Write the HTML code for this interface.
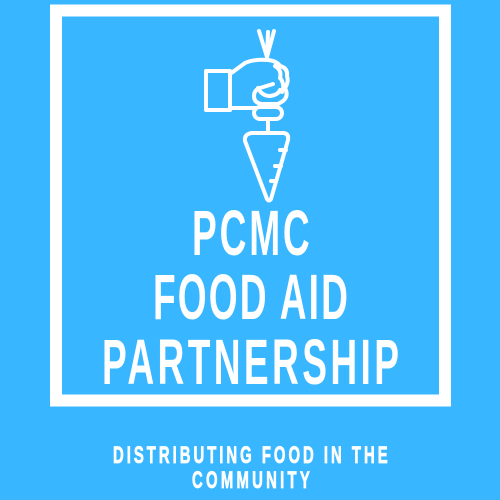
<!DOCTYPE html>
<html><head><style>
html,body{margin:0;padding:0;background:#38b6ff;}
body{width:500px;height:500px;overflow:hidden;}
svg{display:block;}
</style></head><body>
<svg width="500" height="500" viewBox="0 0 500 500" xmlns="http://www.w3.org/2000/svg">
<rect width="500" height="500" fill="#38b6ff"/>
<rect x="56" y="10.5" width="389" height="390" fill="none" stroke="#fff" stroke-width="12"/>
<g fill="none" stroke="#fff" stroke-width="4" stroke-linecap="round" stroke-linejoin="round">
<line x1="259" y1="31" x2="267" y2="57"/>
<line x1="274" y1="31" x2="267" y2="57"/>
<line x1="268" y1="32" x2="267" y2="57"/>
<rect x="206" y="71" width="24" height="39"/>
<path d="M230 74 L245 63 Q253 59 268 60 Q277 61 280 66 Q288 68 287 76 Q289 82 285 88 Q289 96 283 101 L278 104 L262 104 Q254 103 254 96 Q254 90 260 88"/>
<path d="M230 108 L256 108"/>
<path d="M260 88 L273 84 M275 66 Q282 70 280 78 M281 79 Q285 86 282 92"/>
<path d="M258 88 Q262 96 270 96 Q278 95 280 90"/>
<rect x="254" y="107" width="28" height="12" rx="6"/>
<line x1="268" y1="119" x2="268" y2="133"/>
<path d="M252 133 L284 133 Q289 134 288 140 L271 199 Q269 202 267 199 L245 141 Q244 134 252 133 Z"/>
<line x1="280" y1="150" x2="286" y2="150"/>
<line x1="275" y1="166" x2="281" y2="166"/>
<line x1="271" y1="181" x2="276" y2="181"/>
</g>
<g fill="#fff" font-family="Liberation Sans, sans-serif" font-weight="bold">
<g transform="translate(192,255) scale(0.58,1)"><text x="0" y="0" font-size="64" textLength="203" lengthAdjust="spacing">PCMC</text></g>
<g transform="translate(153,319) scale(0.58,1)"><text x="0" y="0" font-size="64" textLength="336" lengthAdjust="spacing">FOOD AID</text></g>
<g transform="translate(102,384) scale(0.58,1)"><text x="0" y="0" font-size="64" textLength="512" lengthAdjust="spacing">PARTNERSHIP</text></g>
<g stroke="#fff" stroke-width="0.8">
<g transform="translate(113,463) scale(0.62,1)"><text x="0" y="0" font-size="24" textLength="443" lengthAdjust="spacing">DISTRIBUTING FOOD IN THE</text></g>
<g transform="translate(192,488) scale(0.62,1)"><text x="0" y="0" font-size="24" textLength="190" lengthAdjust="spacing">COMMUNITY</text></g>
</g>
</g>
</svg>
</body></html>
